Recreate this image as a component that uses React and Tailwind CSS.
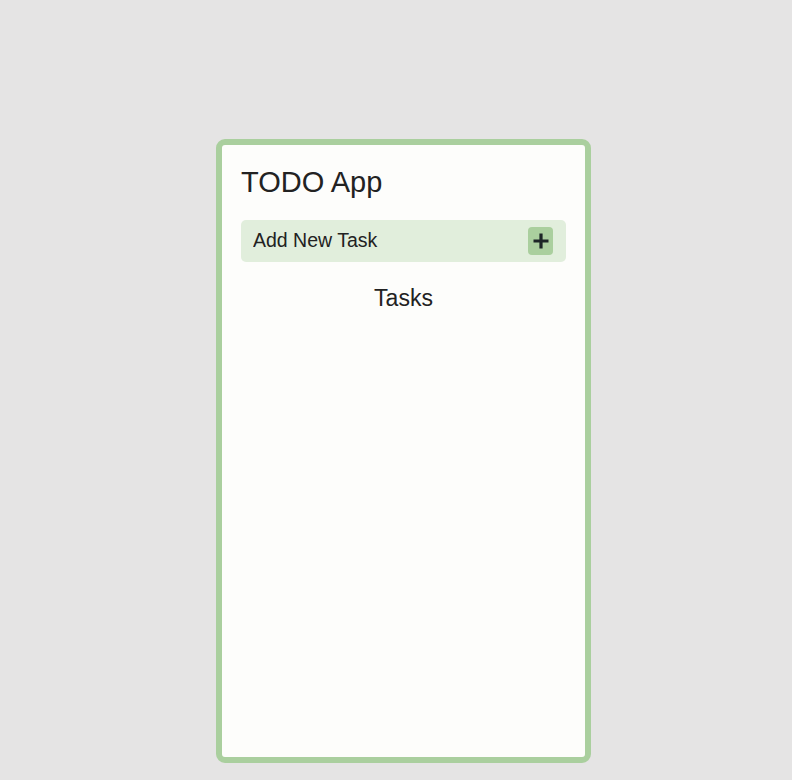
import { useState } from 'react'

function App() {
  const [task, setTask] = useState('')

  return (
    <div className="min-h-screen bg-[#e5e4e4] pl-[15px] pt-[139px] font-['Liberation_Sans',Arial,sans-serif] text-[#222]">
      <div className="mx-auto flex h-[624px] w-[375px] flex-col rounded-[9px] border-[6px] border-[#aacf9e] bg-[#fdfdfb] px-[19px] pt-[21px]">
        <h1 className="text-[29px] leading-[33px]">TODO App</h1>

        <div className="mt-[21px] flex h-[42px] items-center justify-between rounded-[5px] bg-[#e1eedc] pl-[12px] pr-[13px]">
          <input
            value={task}
            onChange={(event) => setTask(event.target.value)}
            placeholder="Add New Task"
            className="w-full bg-transparent text-[19.5px] text-[#222] placeholder:text-[#222] focus:outline-none"
          />
          <button
            type="button"
            className="flex h-[28px] w-[25px] shrink-0 items-center justify-center rounded-[4px] bg-[#aacf9e]"
          >
            <svg width="18" height="18" viewBox="0 0 18 18">
              <path d="M9 1.5v15M1.5 9h15" stroke="#1c2626" strokeWidth="3.2" />
            </svg>
          </button>
        </div>

        <h2 className="mt-[23px] text-center text-[23px] leading-[26px]">Tasks</h2>
      </div>
    </div>
  )
}

export default App
